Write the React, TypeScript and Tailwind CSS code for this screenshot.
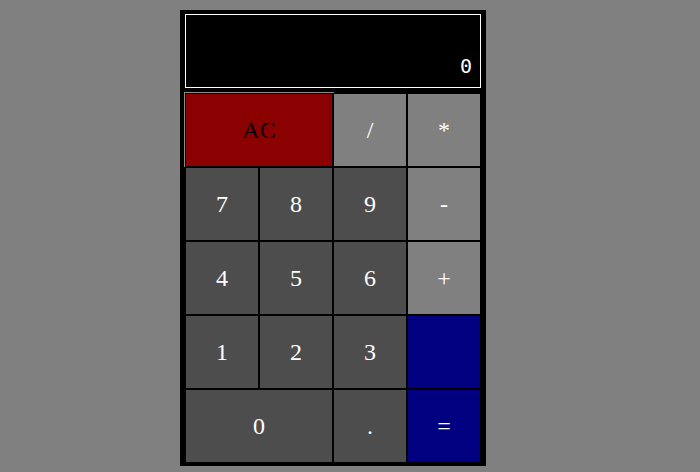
const keys = [
  { label: "7", kind: "num" },
  { label: "8", kind: "num" },
  { label: "9", kind: "num" },
  { label: "-", kind: "op" },
  { label: "4", kind: "num" },
  { label: "5", kind: "num" },
  { label: "6", kind: "num" },
  { label: "+", kind: "op" },
  { label: "1", kind: "num" },
  { label: "2", kind: "num" },
  { label: "3", kind: "num" },
  { label: "", kind: "eq" },
];

const kindClass: Record<string, string> = {
  num: "bg-[#4d4d4d] text-white",
  op: "bg-[#808080] text-white",
  eq: "bg-[#000080] text-white",
};

const Key = ({ label, className }: { label: string; className: string }) => (
  <button className={`flex items-center justify-center text-[24px] leading-none ${className}`}>
    {label}
  </button>
);

export default function App() {
  return (
    <div className="min-h-[472px] w-[700px] bg-[#808080] pt-[10px] font-['Liberation_Serif',serif]">
      <div className="ml-[180px] flex h-[456px] w-[306px] flex-col bg-black px-[5px] pt-[4px]">
        <div className="flex h-[74px] w-full items-end justify-end border border-white pb-[11px] pr-[8px]">
          <span className="font-['DejaVu_Sans_Mono',monospace] text-[20px] leading-none text-white">0</span>
        </div>

        <div className="mx-[1px] mt-[6px] grid grid-cols-[repeat(4,72px)] grid-rows-[repeat(5,72px)] gap-[2px]">
          <div className="relative col-span-2">
            <span className="absolute -top-[2px] -left-[2px] -right-[2px] -bottom-[1px] border-t border-l border-[#8a8a8a]" />
            <Key label="AC" className="relative h-full w-full bg-[#8b0000] text-black" />
          </div>
          <Key label="/" className={kindClass.op} />
          <Key label="*" className={kindClass.op} />

          {keys.map((k, i) => (
            <Key key={i} label={k.label} className={kindClass[k.kind]} />
          ))}

          <Key label="0" className={`col-span-2 ${kindClass.num}`} />
          <Key label="." className={kindClass.num} />
          <Key label="=" className={kindClass.eq} />
        </div>
      </div>
    </div>
  );
}
